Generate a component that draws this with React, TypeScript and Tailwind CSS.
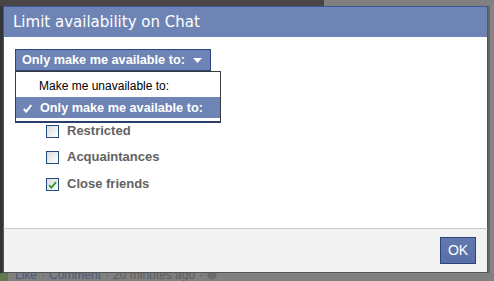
import { useState } from 'react'

const lists = [
  { id: 'restricted', label: 'Restricted', checked: false },
  { id: 'acquaintances', label: 'Acquaintances', checked: false },
  { id: 'close', label: 'Close friends', checked: true },
]

function Checkbox({ checked }: { checked: boolean }) {
  return (
    <div className="w-[13px] h-[13px] shrink-0 border border-[#234a7c] bg-gradient-to-br from-[#dcdcdc] to-white flex items-center justify-center">
      {checked && (
        <svg width="9" height="8" viewBox="0 0 9 8">
          <path d="M1 4.2 L3.4 6.6 L8 1.2" fill="none" stroke="#2f9a2a" strokeWidth="1.8" />
        </svg>
      )}
    </div>
  )
}

export default function App() {
  const [items] = useState(lists)

  return (
    <div className="w-[494px] h-[281px] overflow-hidden bg-[#808080] flex flex-col font-['Liberation_Sans',Arial,sans-serif]">
      {/* page behind the overlay, top strip */}
      <div className="h-[6px] flex shrink-0">
        <div className="w-[324px] bg-[#4a4646]" />
        <div className="flex-1 bg-[#808080]" />
      </div>

      <div className="flex shrink-0">
        <div className="w-[3px] bg-[#353535]" />

        {/* dialog */}
        <div className="relative z-10 w-[485px] h-[267px] flex flex-col">
          <div className="h-[31px] bg-[#6d84b4] border-t border-x border-[#3b5998] pl-[9px] pt-[1px] leading-[29px] text-white text-[15px] font-['DejaVu_Sans',sans-serif]">
            Limit availability on Chat
          </div>

          <div className="relative h-[191px] bg-white border-x border-[#555]">
            <div className="pl-[11px] pt-[12px]">
              <div className="w-[196px] h-[22px] border border-[#29447e] bg-[#6d84b4] flex items-center pl-[6px] text-white font-bold text-[12.7px] leading-[20px]">
                <span>Only make me available to:</span>
                <svg className="ml-[8px]" width="9" height="5" viewBox="0 0 9 5">
                  <path d="M0 0 H9 L4.5 5 Z" fill="#fff" />
                </svg>
              </div>
            </div>

            <div className="pl-[42px] pt-[54px] flex flex-col">
              {items.map((item, i) => (
                <div key={item.id} className={`flex items-start gap-[8px] ${i === 1 ? 'mt-[13px]' : i === 2 ? 'mt-[14px]' : ''}`}>
                  <Checkbox checked={item.checked} />
                  <span className="text-[13px] leading-[11px] font-bold text-[#626262]">{item.label}</span>
                </div>
              ))}
            </div>

            {/* open dropdown menu */}
            <div className="absolute left-[11px] top-[34px] w-[206px] bg-white border-x border-t border-[#3a3a3a] border-b-2 border-b-[#2b3f6b] pb-[3px]">
              <div className="h-[25px] pl-[23px] pt-[4px] leading-[21px] text-[12px] text-black">
                Make me unavailable to:
              </div>
              <div className="h-[21px] bg-[#6d84b4] flex items-start pl-[7px] pt-[2px] leading-[19px] text-white font-bold text-[12.7px]">
                <svg className="mt-[5px] mr-[8px]" width="9" height="9" viewBox="0 0 9 9">
                  <path d="M0.8 4.8 L3.2 7.6 L8.3 1" fill="none" stroke="#fff" strokeWidth="2" />
                </svg>
                <span>Only make me available to:</span>
              </div>
            </div>
          </div>

          <div className="h-[45px] bg-[#f2f2f2] border-t border-t-[#c9c9c9] border-x border-b border-[#555] flex justify-end pr-[11px] pt-[8px]">
            <button className="w-[36px] h-[27px] border border-[#29447e] bg-gradient-to-b from-[#6279ad] to-[#566fa6] text-white text-[14px] leading-[25px]">
              OK
            </button>
          </div>
        </div>

        <div className="w-[2px] bg-[#666]" />
        <div className="flex-1 bg-[#858585]" />
      </div>

      {/* page behind the overlay, bottom strip */}
      <div className="h-[8px] flex items-end overflow-hidden">
        <div className="w-[8px] h-[8px] bg-[#5f7a4e] mr-[7px]" />
        <div className="text-[12px] leading-[12px] whitespace-nowrap text-[#5c5c5c] flex items-end">
          <span className="text-[#4a5a7e]">Like</span>
          <span className="mx-[4px]">·</span>
          <span className="text-[#4a5a7e]">Comment</span>
          <span className="mx-[4px]">·</span>
          <span>20 minutes ago</span>
          <span className="mx-[4px]">·</span>
          <svg width="10" height="10" viewBox="0 0 10 10" className="mb-[1px]">
            <circle cx="5" cy="5" r="4.5" fill="#6a6a6a" />
          </svg>
        </div>
      </div>
    </div>
  )
}
